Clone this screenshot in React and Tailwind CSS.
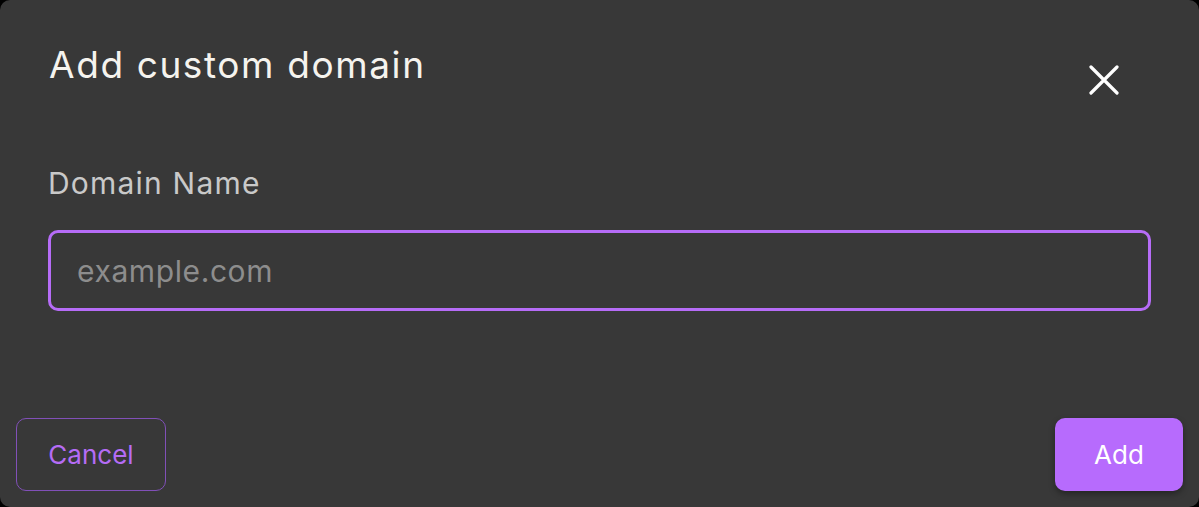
import React, { useState } from "react";

const App = () => {
  const [domain, setDomain] = useState("");

  return (
    <div className="w-[1199px] h-[507px] bg-black">
      <div
        className="w-full h-full bg-[#383838] rounded-[10px] flex flex-col"
        style={{ fontFamily: "Inter, 'Noto Sans', sans-serif" }}
      >
        <div className="flex justify-between items-start pl-[49px] pr-[80px] pt-[43px]">
          <h2 className="text-[37px] leading-[44px] text-[#f5f3ee] font-normal tracking-[1.6px]">
            Add custom domain
          </h2>
          <button className="mt-[22px] w-[30px] h-[30px] flex items-center justify-center">
            <svg width="30" height="30" viewBox="0 0 30 30" fill="none">
              <path
                d="M2 2 L28 28 M28 2 L2 28"
                stroke="white"
                strokeWidth="3.2"
                strokeLinecap="round"
              />
            </svg>
          </button>
        </div>

        <div className="px-[48px] pt-[70px]">
          <label className="block text-[30px] leading-[36px] text-[#c9c9c9] tracking-[1.2px]">
            Domain Name
          </label>
          <input
            value={domain}
            onChange={(e) => setDomain(e.target.value)}
            placeholder="example.com"
            className="mt-[29px] w-full h-[81px] rounded-[10px] border-[3px] border-[#b66cf7] bg-transparent px-[26px] text-[30px] tracking-[0.6px] text-white placeholder:text-[#8d8d8d] outline-none"
          />
        </div>

        <div className="mt-auto flex justify-between items-center px-[16px] pb-[16px]">
          <button className="w-[150px] h-[73px] rounded-[10px] border-[1.5px] border-[#8150b8] text-[#b56cf5] text-[26px]">
            Cancel
          </button>
          <button className="w-[128px] h-[73px] rounded-[10px] bg-[#b76bfd] text-white text-[26px] shadow-[0_3px_6px_rgba(0,0,0,0.35)]">
            Add
          </button>
        </div>
      </div>
    </div>
  );
};

export default App;
